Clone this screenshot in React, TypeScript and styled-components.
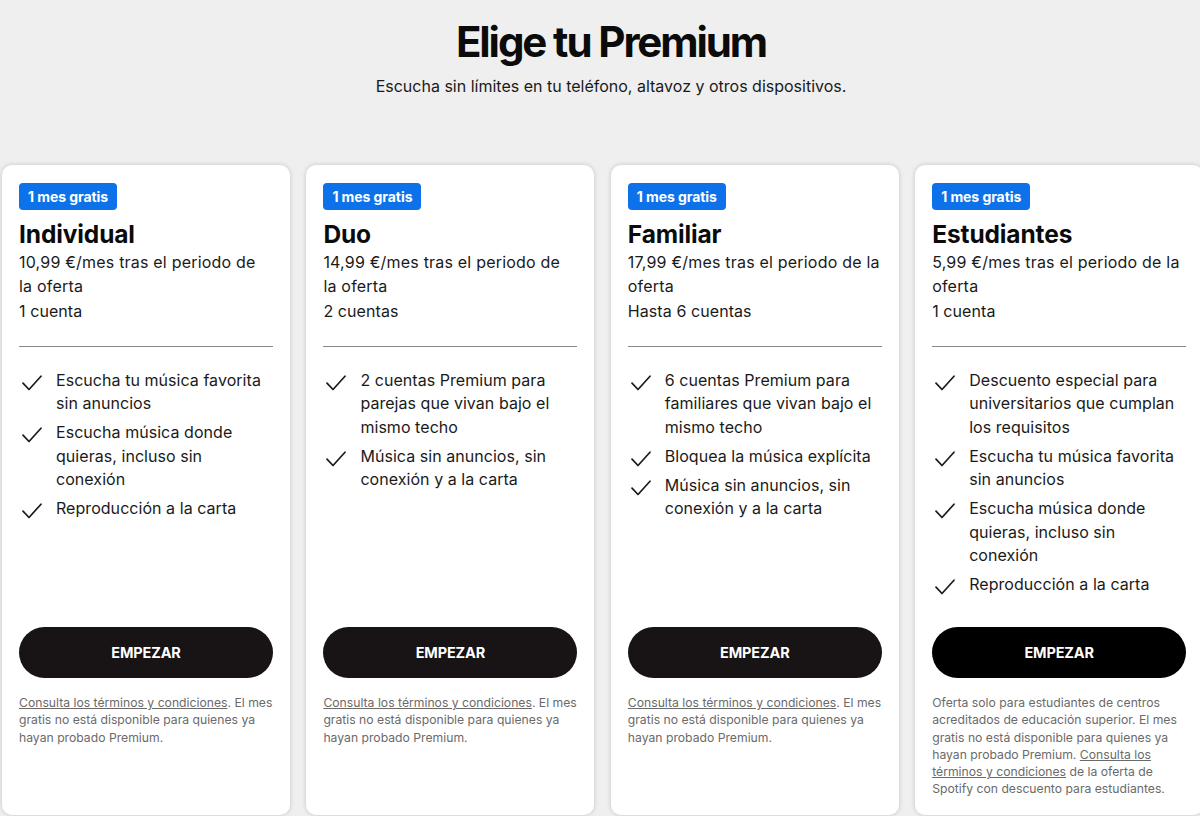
import React from "react";
import styled, { createGlobalStyle } from "styled-components";

const Global = createGlobalStyle`
  html, body { margin: 0; padding: 0; }
  body {
    background: #efefef;
    font-family: Inter, "Noto Sans", "Liberation Sans", sans-serif;
    color: #121212;
    overflow: hidden;
    width: 1200px;
    height: 816px;
  }
`;

const Page = styled.div`
  width: 1200px;
  height: 816px;
  overflow: hidden;
  display: flex;
  flex-direction: column;
`;

const Header = styled.header`
  display: flex;
  flex-direction: column;
  align-items: center;
  padding-left: 22px;
`;

const Title = styled.h1`
  margin: 17px 0 0;
  font-size: 42px;
  line-height: 50px;
  font-weight: 700;
  letter-spacing: -0.05em;
  color: #0b0b0b;
`;

const Subtitle = styled.p`
  margin: 8px 0 0;
  font-size: 16px;
  line-height: 22px;
  letter-spacing: 0;
  color: #1a1a1a;
`;

const Grid = styled.div`
  margin-top: 68px;
  margin-left: 2px;
  display: grid;
  grid-template-columns: repeat(4, 288px);
  gap: 16.4px;
`;

const Card = styled.div`
  background: #fff;
  border-radius: 10px;
  box-shadow: 0 0 5px rgba(0, 0, 0, 0.18);
  height: 650px;
  padding: 18px 17px 0;
  box-sizing: border-box;
  display: flex;
  flex-direction: column;
`;

const Badge = styled.span`
  align-self: flex-start;
  background: #0d72ea;
  color: #fff;
  font-weight: 700;
  font-size: 14px;
  letter-spacing: -0.005em;
  line-height: 27px;
  padding: 0 9px;
  border-radius: 4px;
`;

const PlanName = styled.h2`
  margin: 9px 0 0;
  font-size: 24.5px;
  line-height: 30px;
  font-weight: 700;
  letter-spacing: -0.005em;
  color: #0b0b0b;
`;

const Price = styled.p`
  margin: 2px 0 0;
  font-size: 16px;
  line-height: 23.5px;
  letter-spacing: 0.0125em;
  color: #1a1a1a;
`;

const Accounts = styled.p`
  margin: 2px 0 0;
  font-size: 16px;
  line-height: 23.5px;
  letter-spacing: 0.005em;
  color: #1a1a1a;
`;

const Divider = styled.hr`
  border: none;
  border-top: 1px solid #878787;
  margin: 22px 0 0;
  width: 100%;
`;

const Features = styled.ul`
  list-style: none;
  margin: 22px 0 0;
  padding: 0;
  flex: 1;
  display: flex;
  flex-direction: column;
  gap: 5.5px;
`;

const Feature = styled.li`
  display: flex;
  align-items: flex-start;
  gap: 14px;
  font-size: 16px;
  line-height: 23.5px;
  letter-spacing: 0.003em;
  color: #1a1a1a;
  svg {
    flex: none;
    margin-top: 6px;
    margin-left: 3px;
  }
`;

const Button = styled.button<{ $black?: boolean }>`
  height: 51px;
  width: 100%;
  border: none;
  border-radius: 26px;
  background: ${(p) => (p.$black ? "#000" : "#181314")};
  color: #fff;
  font-family: inherit;
  font-weight: 700;
  font-size: 14.5px;
  letter-spacing: -0.01em;
  flex: none;
`;

const Footer = styled.p`
  margin: 16px 0 0;
  height: 121px;
  flex: none;
  font-size: 12.2px;
  line-height: 17.3px;
  color: #6a6a6a;
  letter-spacing: 0;
`;

const TermsLink = styled.span`
  color: #6a6a6a;
  text-decoration: underline;
`;

const Check = () => (
  <svg width="20" height="16" viewBox="0 0 20 16" fill="none">
    <path d="M1 8.2 L7 14.5 L19 1.2" stroke="#1a1a1a" strokeWidth="1.7" strokeLinecap="round" strokeLinejoin="round" />
  </svg>
);

type Plan = {
  name: string;
  price: string;
  accounts: string;
  features: string[];
  black?: boolean;
  footer: React.ReactNode;
};

const stdFooter = (
  <>
    <TermsLink>Consulta los términos y condiciones</TermsLink>. El mes gratis no está disponible para quienes ya hayan
    probado Premium.
  </>
);

const plans: Plan[] = [
  {
    name: "Individual",
    price: "10,99 €/mes tras el periodo de la oferta",
    accounts: "1 cuenta",
    features: [
      "Escucha tu música favorita sin anuncios",
      "Escucha música donde quieras, incluso sin conexión",
      "Reproducción a la carta",
    ],
    footer: stdFooter,
  },
  {
    name: "Duo",
    price: "14,99 €/mes tras el periodo de la oferta",
    accounts: "2 cuentas",
    features: [
      "2 cuentas Premium para parejas que vivan bajo el mismo techo",
      "Música sin anuncios, sin conexión y a la carta",
    ],
    footer: stdFooter,
  },
  {
    name: "Familiar",
    price: "17,99 €/mes tras el periodo de la oferta",
    accounts: "Hasta 6 cuentas",
    features: [
      "6 cuentas Premium para familiares que vivan bajo el mismo techo",
      "Bloquea la música explícita",
      "Música sin anuncios, sin conexión y a la carta",
    ],
    footer: stdFooter,
  },
  {
    name: "Estudiantes",
    price: "5,99 €/mes tras el periodo de la oferta",
    accounts: "1 cuenta",
    features: [
      "Descuento especial para universitarios que cumplan los requisitos",
      "Escucha tu música favorita sin anuncios",
      "Escucha música donde quieras, incluso sin conexión",
      "Reproducción a la carta",
    ],
    black: true,
    footer: (
      <>
        Oferta solo para estudiantes de centros acreditados de educación superior. El mes gratis no está disponible para
        quienes ya hayan probado Premium. <TermsLink>Consulta los términos y condiciones</TermsLink> de la oferta de
        Spotify con descuento para estudiantes.
      </>
    ),
  },
];

export default function App() {
  return (
    <Page>
      <Global />
      <Header>
        <Title>Elige tu Premium</Title>
        <Subtitle>Escucha sin límites en tu teléfono, altavoz y otros dispositivos.</Subtitle>
      </Header>
      <Grid>
        {plans.map((p) => (
          <Card key={p.name}>
            <Badge>1 mes gratis</Badge>
            <PlanName>{p.name}</PlanName>
            <Price>{p.price}</Price>
            <Accounts>{p.accounts}</Accounts>
            <Divider />
            <Features>
              {p.features.map((f) => (
                <Feature key={f}>
                  <Check />
                  <span>{f}</span>
                </Feature>
              ))}
            </Features>
            <Button $black={p.black}>EMPEZAR</Button>
            <Footer>{p.footer}</Footer>
          </Card>
        ))}
      </Grid>
    </Page>
  );
}
